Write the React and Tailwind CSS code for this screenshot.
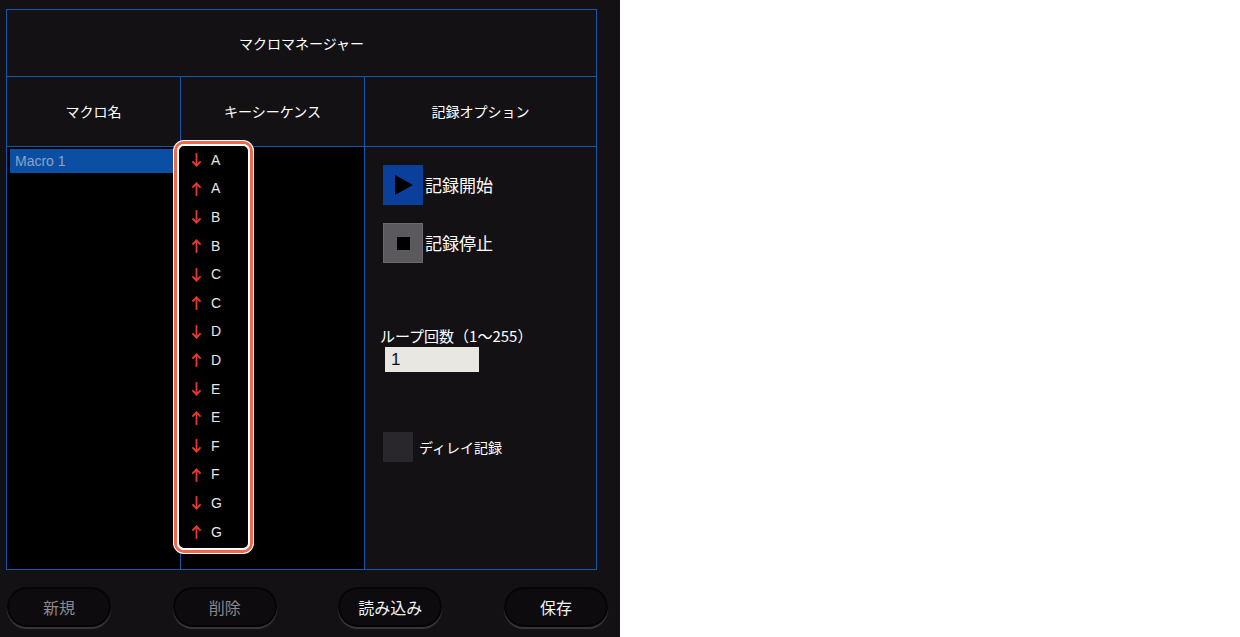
import React from "react";

const JP = { fontFamily: '"Noto Sans CJK JP", "Noto Sans", sans-serif' };
const LS = { fontFamily: '"Liberation Sans", Arial, sans-serif' };

function Arrow({ up }) {
  return (
    <svg width="9" height="14" viewBox="0 0 9 14" className="block">
      {up ? (
        <g stroke="#ea3a2b" strokeWidth="1.8" fill="none" strokeLinecap="square">
          <line x1="4.5" y1="1.5" x2="4.5" y2="13" />
          <polyline points="1,5 4.5,1.5 8,5" />
        </g>
      ) : (
        <g stroke="#ea3a2b" strokeWidth="1.8" fill="none" strokeLinecap="square">
          <line x1="4.5" y1="1" x2="4.5" y2="12.5" />
          <polyline points="1,9 4.5,12.5 8,9" />
        </g>
      )}
    </svg>
  );
}

const keys = ["A", "B", "C", "D", "E", "F", "G"];

function Btn({ label, dim }) {
  return (
    <div className="w-[104px] h-[40px] rounded-full bg-[#050406] p-[2px] shadow-[0_2px_1px_#3a373c]">
      <div
        className={`w-full h-full rounded-full bg-[#0d0b0e] flex items-center justify-center text-[16px] ${dim ? "text-[#8b898c]" : "text-[#f2f2f2]"}`}
        style={JP}
      >
        {label}
      </div>
    </div>
  );
}

function KeyRow({ k, up }) {
  return (
    <div className="h-[28.6px] flex items-center">
      <div className="ml-[13px] w-[9px]"><Arrow up={up} /></div>
      <span className="ml-[10px] text-[14px] text-[#e6e6e6]" style={LS}>{k}</span>
    </div>
  );
}

export default function App() {
  return (
    <div className="w-[1240px] h-[637px] bg-white flex">
      <div className="w-[620px] h-full bg-[#141115] pt-[9px] pl-[6px]" style={JP}>
        <div className="w-[591px] border border-[#1656ac] text-white">
          <div className="h-[67px] border-b border-[#1656ac] flex items-center justify-center text-[14px]">
            マクロマネージャー
          </div>
          <div className="h-[70px] border-b border-[#1656ac] flex text-[14px]">
            <div className="w-[174px] border-r border-[#1656ac] flex items-center justify-center">マクロ名</div>
            <div className="w-[184px] border-r border-[#1656ac] flex items-center justify-center">キーシーケンス</div>
            <div className="w-[231px] flex items-center justify-center">記録オプション</div>
          </div>
          <div className="h-[422px] flex relative">
            <div className="w-[174px] border-r border-[#1656ac] bg-black pt-[2px] pl-[3px]">
              <div
                className="w-[164px] h-[24px] bg-[#0b4fa5] text-[#8ea2c2] text-[14px] pl-[5px] flex items-center"
                style={LS}
              >
                Macro 1
              </div>
            </div>
            <div className="w-[184px] border-r border-[#1656ac] bg-black"></div>
            <div className="w-[231px] bg-[#141115] pl-[18px] pt-[18px] flex flex-col">
              <div className="flex items-center h-[40px]">
                <div className="w-[40px] h-[40px] bg-[#0a3f9c] flex items-center justify-center">
                  <svg width="22" height="22" viewBox="0 0 22 22">
                    <polygon points="3,1 21,11 3,21" fill="#000" />
                  </svg>
                </div>
                <span className="ml-[2px] text-[17px]">記録開始</span>
              </div>
              <div className="flex items-center h-[40px] mt-[18px]">
                <div className="w-[40px] h-[40px] bg-[#5b585e] border border-[#6a676d] flex items-center justify-center">
                  <div className="w-[13px] h-[13px] bg-black"></div>
                </div>
                <span className="ml-[2px] text-[17px]">記録停止</span>
              </div>
              <div className="mt-[62px] -ml-[3px] text-[15px] leading-[21px]">ループ回数（1～255）</div>
              <div
                className="mt-[1px] ml-[2px] w-[94px] h-[25px] bg-[#e8e7e2] text-[#111] text-[17px] pl-[6px] flex items-center"
                style={LS}
              >
                1
              </div>
              <div className="flex items-center mt-[60px]">
                <div className="w-[30px] h-[30px] bg-[#2a272c]"></div>
                <span className="ml-[6px] text-[14px]">ディレイ記録</span>
              </div>
            </div>

            <div className="absolute left-[166px] top-[-7px] w-[81px] h-[414px] rounded-[11px] bg-white p-[1px]">
              <div className="w-full h-full rounded-[10px] border-[3px] border-[#f0674b]">
                <div className="w-full h-full rounded-[7px] border-2 border-white bg-black flex flex-col">
                  {keys.flatMap((k) => [
                    <KeyRow key={k + "d"} k={k} />,
                    <KeyRow key={k + "u"} k={k} up />,
                  ])}
                </div>
              </div>
            </div>
          </div>
        </div>
        <div className="mt-[17px] w-[602px] flex justify-between pl-[1px]">
          <Btn label="新規" dim />
          <Btn label="削除" dim />
          <Btn label="読み込み" />
          <Btn label="保存" />
        </div>
      </div>
      <div className="flex-1 bg-white"></div>
    </div>
  );
}
